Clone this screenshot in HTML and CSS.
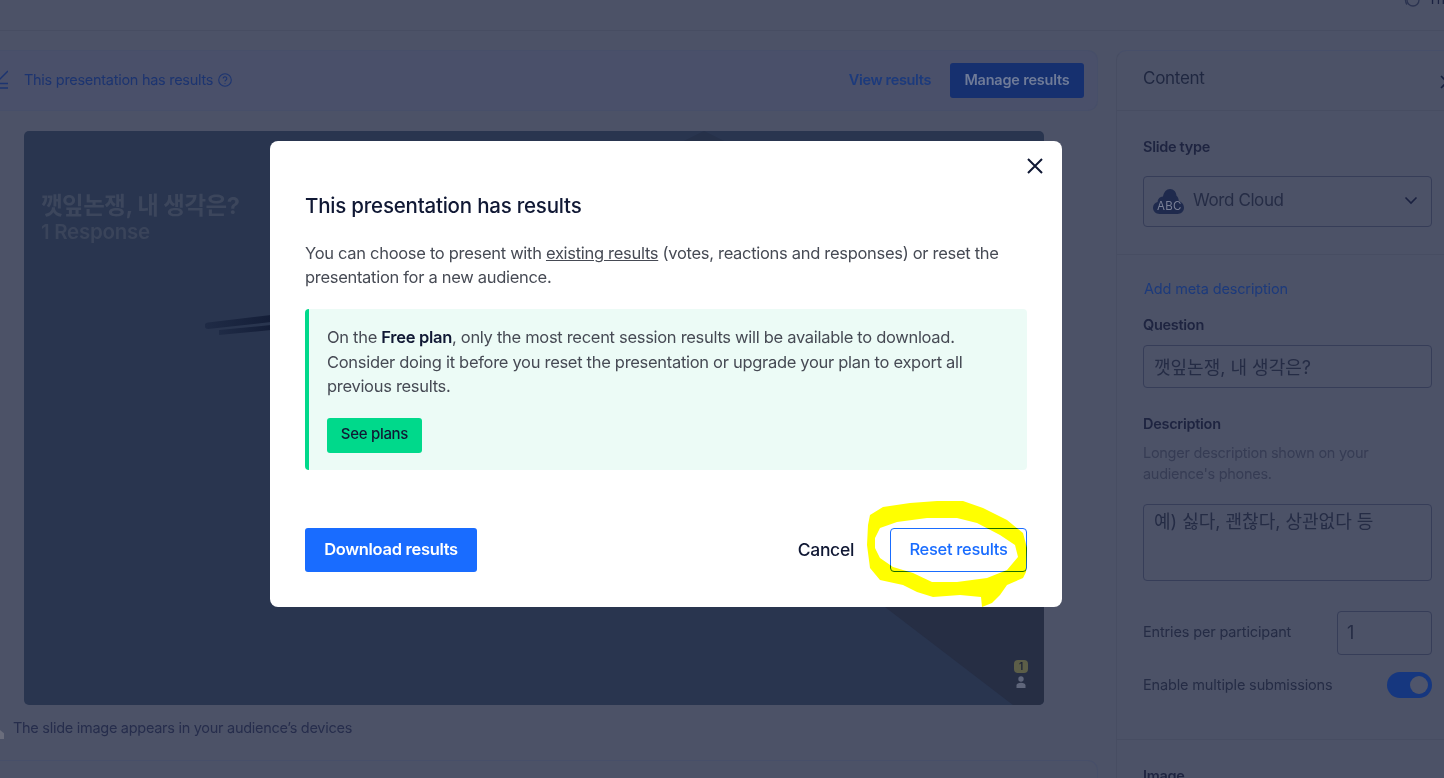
FILE: index.html
```html
<!DOCTYPE html>
<html lang="en">
<head>
  <meta charset="UTF-8" />
  <title>Presentation results</title>
  <link rel="stylesheet" href="styles.css">
</head>
<body>
  <div class="topbar">
    <div class="share">
      <svg width="18" height="18" viewBox="0 0 18 18" fill="none" stroke="#2b3350" stroke-width="1.300"><circle cx="10" cy="11" r="6"/><path d="M4 15.500C1.500 12 2 7 6 5"/></svg>
      <span>Th</span>
    </div>
  </div>

  <div class="editor">
    <div class="main">
      <div class="banner">
        <div class="banner-left">
          <svg class="check-icon" width="16" height="20" viewBox="-8 0 16 20" fill="none" stroke="#1c3470" stroke-width="1.500"><path d="M-6 9l3 3L8 1"/><path d="M-8 13.500H8M-8 18H8"/></svg>
          <span>This presentation has results</span>
          <svg width="14" height="14" viewBox="0 0 14 14" fill="none" stroke="#1c3470" stroke-width="1.100"><circle cx="7" cy="7" r="6.300"/><path d="M5.200 5.500a1.800 1.800 0 1 1 2.800 1.500c-.7.400-1 .8-1 1.400"/><path d="M7 10v.8"/></svg>
        </div>
        <div class="banner-right">
          <a class="view-link">View results</a>
          <a class="manage-btn">Manage results</a>
        </div>
      </div>

      <div class="slide">
        <div class="peak"></div>
        <h1>깻잎논쟁, 내 생각은?</h1>
        <p>1 Response</p>
        <div class="corner"></div>
        <svg class="bars" width="70" height="22" viewBox="0 0 70 22">
          <defs><linearGradient id="barFade"><stop offset="0" stop-color="#1f2b46"/><stop offset="1" stop-color="#141e38"/></linearGradient></defs>
          <path fill="url(#barFade)" d="M3 7.500L66 0v7L3 14a3 3 0 0 1 0-6.500z"/>
          <path fill="url(#barFade)" d="M14 15L66 10v5L14 20z"/>
        </svg>
        <div class="count">
          <span class="count-num">1</span>
          <svg width="10" height="12" viewBox="0 0 10 12" fill="#5f667b"><circle cx="5" cy="3" r="2.700"/><path d="M.5 12V9.500C.5 7.500 2.500 6.700 5 6.700s4.500.8 4.500 2.800V12z"/></svg>
        </div>
      </div>

      <div class="caption">The slide image appears in your audience’s devices</div>
      <div class="next-card"></div>
    </div>

    <aside class="panel">
      <div class="panel-head">
        <span>Content</span>
        <svg class="panel-x" width="14" height="14" viewBox="0 0 14 14" fill="none" stroke="#1a2140" stroke-width="1.600"><path d="M1 1l12 12M13 1L1 13"/></svg>
      </div>
      <div class="panel-type">
        <div class="label">Slide type</div>
        <div class="select">
          <svg class="cloud" width="31" height="25" viewBox="0 0 31 25"><path fill="#1f2a4d" d="M6.500 25C3 25 0 22.500 0 18.800c0-3 2-5.200 4.600-5.800C4.800 9.800 7 7.600 10 7.500 10.800 3 13.500 0 17 0c3.800 0 6.300 3 6.500 6.800 1.500 1.200 2.200 3.200 2.300 5.300 3 .9 5.200 3.400 5.200 6.700 0 3.700-3 6.200-6.500 6.200z"/></svg>
          <span class="abc">ABC</span>
          <span class="select-text">Word Cloud</span>
          <svg class="chev" width="14" height="9" viewBox="0 0 14 9" fill="none" stroke="#1a2140" stroke-width="1.600"><path d="M1.500 1.500L7 7l5.500-5.500"/></svg>
        </div>
      </div>
      <div class="panel-form">
        <a class="meta-link">Add meta description</a>
        <div class="label q-label">Question</div>
        <div class="field">깻잎논쟁, 내 생각은?</div>
        <div class="label d-label">Description</div>
        <div class="hint">Longer description shown on your audience's phones.</div>
        <div class="field area">예) 싫다, 괜찮다, 상관없다 등</div>
        <div class="row entries">
          <span>Entries per participant</span>
          <div class="field small">1</div>
        </div>
        <div class="row submissions">
          <span>Enable multiple submissions</span>
          <div class="toggle"><div class="knob"></div></div>
        </div>
      </div>
      <div class="panel-image"><div class="label">Image</div></div>
    </aside>
  </div>

  <div class="edge-mark"></div>

  <div class="overlay">
    <div class="modal">
      <svg class="modal-x" width="18" height="18" viewBox="0 0 18 18" fill="none" stroke="#101834" stroke-width="2"><path d="M2 2l14 14M16 2L2 16"/></svg>
      <h2>This presentation has results</h2>
      <p class="intro">You can choose to present with <u>existing results</u> (votes, reactions and responses) or reset the presentation for a new audience.</p>
      <div class="notice">
        <p>On the <b>Free plan</b>, only the most recent session results will be available to download. Consider doing it before you reset the presentation or upgrade your plan to export all previous results.</p>
        <a class="plans-btn">See plans</a>
      </div>
      <div class="modal-actions">
        <a class="download-btn">Download results</a>
        <div class="actions-right">
          <a class="cancel">Cancel</a>
          <a class="reset-btn">Reset results</a>
        </div>
      </div>
    </div>
    <svg class="scribble" width="180" height="115" viewBox="0 0 180 115"><path fill="#ffff00" fill-rule="evenodd" d="M8 30L10 20L23 12L50 8L77 6L103 6L123 13L147 25L163 38L167 53L166 77L163 83L147 90L140 100L132 108L122 112L121 102L100 100L73 102L57 97L43 90L20 85L10 73L7 50Z M15 43L20 33L37 27L67 23L97 23L117 28L140 40L155 50L158 62L147 75L127 83L97 87L72 87L53 78L33 72L20 63L15 53Z"/></svg>
  </div>
</body>
</html>
```

FILE: styles.css
```css
* {
  box-sizing: border-box;
}
html, body {
  margin: 0;
  height: 100%;
  overflow: hidden;
}
body {
  position: relative;
  background: #4c5267;
  color: #1a2140;
  font-family: "Inter", "Noto Sans CJK KR", sans-serif;
  font-size: 15px;
  letter-spacing: -0.28px;
}

/* page behind the dialog */
.topbar {
  height: 31px;
  border-bottom: 1px solid #474d62;
  display: flex;
  justify-content: flex-end;
  overflow: hidden;
}
.share {
  display: flex;
  gap: 7px;
  margin: -11px 0 0 0;
  height: 20px;
  width: 41px;
  overflow: hidden;
  font-size: 14px;
  line-height: 20px;
  white-space: nowrap;
}
.share svg {
  flex: none;
}
.editor {
  display: flex;
  padding-top: 19px;
}
.main {
  width: 1116px;
  flex: none;
  padding-right: 18px;
}
.banner {
  height: 61px;
  padding: 0 13px 0 0;
  display: flex;
  justify-content: space-between;
  align-items: center;
  border: 1px solid #474f69;
  border-left: none;
  border-radius: 0 10px 10px 0;
  background: #4a506a;
  color: #1c3470;
  font-size: 14.500px;
}
.banner-left {
  display: flex;
  align-items: center;
  gap: 5px;
  margin-bottom: 2px;
}
.check-icon {
  margin-right: 11px;
  margin-left: -8px;
}
.banner-right {
  display: flex;
  align-items: center;
  gap: 19px;
  font-weight: 600;
  letter-spacing: -0.2px;
}
.view-link {
  color: #1c3a7c;
  letter-spacing: -0.35px;
  margin-bottom: 2px;
}
.manage-btn {
  width: 134px;
  height: 35px;
  line-height: 33px;
  text-align: center;
  background: #16306f;
  color: #6f7b98;
  border-radius: 3px;
}
.slide {
  position: relative;
  margin: 20px 0 0 24px;
  width: 1020px;
  height: 574px;
  padding: 61px 17px 0;
  background: #29354f;
  border-radius: 5px;
  overflow: hidden;
  color: #3c465c;
}
.slide h1 {
  margin: 0;
  font-size: 23.500px;
  line-height: 27px;
  font-weight: 700;
  letter-spacing: -0.5px;
}
.slide p {
  margin: 0;
  font-size: 20.500px;
  line-height: 26px;
  font-weight: 600;
  color: #3a445a;
}
.peak {
  position: absolute;
  left: 660px;
  top: 0;
  width: 40px;
  height: 10px;
  background: #263149;
  clip-path: polygon(50% 0, 100% 100%, 0 100%);
}
.corner {
  position: absolute;
  right: 0;
  bottom: 0;
  width: 159px;
  height: 98px;
  background: #262e44;
  clip-path: polygon(0 0, 100% 0, 100% 100%, 80.500% 100%);
}
.bars {
  position: absolute;
  left: 181px;
  top: 184px;
}
.count {
  position: absolute;
  right: 16px;
  bottom: 17px;
  width: 14px;
  display: flex;
  flex-direction: column;
  align-items: center;
  gap: 3px;
}
.count-num {
  width: 14px;
  height: 13px;
  line-height: 13px;
  text-align: center;
  font-size: 10px;
  font-weight: 600;
  letter-spacing: 0;
  background: #5c5e48;
  color: #1c2235;
  border-radius: 4px;
}
.caption {
  margin: 14px 0 0 13px;
  line-height: 18px;
  font-size: 14.500px;
  color: #262d4c;
}
.next-card {
  margin-top: 23px;
  height: 40px;
  border-top: 1px solid #474f69;
  border-right: 1px solid #474f69;
  border-radius: 0 10px 0 0;
}
.edge-mark {
  position: absolute;
  left: 0;
  top: 730px;
  width: 4px;
  height: 9px;
  background: #6a6d7c;
  clip-path: polygon(0 0, 100% 35%, 100% 100%, 0 100%);
}
.panel {
  flex: 1;
  border-left: 1px solid #474d62;
  border-top: 1px solid #474f69;
  border-radius: 10px 0 0 0;
}
.panel-head {
  height: 60px;
  padding: 0 0 6px 26px;
  display: flex;
  align-items: center;
  justify-content: space-between;
  border-bottom: 1px solid #474d62;
  font-size: 17px;
  color: #1f2740;
}
.panel-x {
  margin-right: -10px;
  margin-top: 8px;
}
.panel-type {
  height: 144px;
  padding: 26px 12px 0 26px;
  border-bottom: 1px solid #474d62;
}
.label {
  font-weight: 600;
  font-size: 14.500px;
  line-height: 20px;
  color: #1e2440;
}
.select {
  position: relative;
  margin-top: 19px;
  height: 51px;
  display: flex;
  align-items: center;
  padding-left: 9px;
  border: 1px solid #363d58;
  border-radius: 4px;
  font-size: 17px;
  letter-spacing: -0.4px;
  color: #252c45;
}
.cloud {
  flex: none;
}
.abc {
  position: absolute;
  left: 13px;
  top: 22px;
  font-size: 11.500px;
  line-height: 14px;
  letter-spacing: 0.3px;
  color: #7a8096;
}
.select-text {
  margin-left: 9px;
  margin-top: -3px;
}
.chev {
  position: absolute;
  right: 13px;
  top: 19px;
}
.panel-form {
  height: 485px;
  padding: 24px 12px 0 26px;
  border-bottom: 1px solid #474d62;
}
.meta-link {
  display: block;
  line-height: 20px;
  font-size: 14.500px;
  letter-spacing: -0.15px;
  color: #1c3a7c;
  margin-left: 1px;
}
.q-label {
  margin-top: 16px;
}
.field {
  margin-top: 10px;
  height: 43px;
  padding: 0 10px;
  line-height: 43px;
  border: 1px solid #363d58;
  border-radius: 4px;
  font-size: 18px;
  letter-spacing: 0;
  color: #252c45;
}
.d-label {
  margin-top: 26px;
}
.hint {
  margin-top: 8px;
  line-height: 21px;
  font-size: 14.500px;
  color: #363c54;
}
.field.area {
  margin-top: 20px;
  height: 77px;
  line-height: 34px;
}
.row {
  display: flex;
  align-items: center;
  justify-content: space-between;
  font-size: 14.500px;
  letter-spacing: -0.15px;
  color: #252c45;
}
.entries {
  margin-top: 30px;
}
.entries span {
  margin-bottom: 4px;
}
.field.small {
  margin-top: 0;
  width: 95px;
  height: 44px;
  padding-left: 9px;
  line-height: 42px;
  letter-spacing: 0;
}
.submissions {
  margin-top: 17px;
}
.submissions span {
  margin-bottom: 2px;
}
.toggle {
  width: 45px;
  height: 26px;
  padding: 4px;
  display: flex;
  justify-content: flex-end;
  background: #16377f;
  border-radius: 13px;
}
.knob {
  width: 18px;
  height: 18px;
  border-radius: 50%;
  background: #4f556b;
}
.panel-image {
  padding: 26px 0 0 26px;
}

/* dialog */
.overlay {
  position: absolute;
  inset: 0;
  padding: 141px 0 0 270px;
}
.modal {
  position: relative;
  width: 792px;
  height: 466px;
  padding: 50px 35px 0;
  background: #fff;
  border-radius: 8px;
  color: #464a54;
  font-size: 16.500px;
  letter-spacing: -0.3px;
}
.modal-x {
  position: absolute;
  top: 16px;
  right: 18px;
}
.modal h2 {
  margin: 0;
  font-size: 20.500px;
  line-height: 30px;
  font-weight: 500;
  letter-spacing: -0.22px;
  color: #101834;
}
.intro {
  margin: 20px 0 0;
  line-height: 24px;
}
.notice {
  margin-top: 20px;
  height: 161px;
  padding: 16px 17px 0 18px;
  background: #ecfbf6;
  border-left: 4px solid #00d98b;
  border-radius: 4px;
}
.notice p {
  margin: 0;
  line-height: 24.500px;
}
.notice b {
  font-weight: 600;
  color: #101834;
}
.plans-btn {
  display: block;
  margin-top: 19px;
  width: 95px;
  height: 35px;
  line-height: 32px;
  text-align: center;
  background: #00d98b;
  color: #101834;
  font-size: 15px;
  font-weight: 500;
  border-radius: 3px;
}
.modal-actions {
  margin-top: 58px;
  display: flex;
  justify-content: space-between;
  align-items: center;
}
.download-btn {
  width: 172px;
  height: 44px;
  line-height: 43px;
  text-align: center;
  background: #196cff;
  color: #fff;
  font-size: 16.500px;
  font-weight: 600;
  border-radius: 3px;
}
.actions-right {
  display: flex;
  align-items: center;
  gap: 36px;
}
.cancel {
  color: #101834;
  font-size: 17.500px;
  font-weight: 500;
  margin-bottom: 2px;
}
.reset-btn {
  width: 137px;
  height: 44px;
  line-height: 41px;
  text-align: center;
  border: 1px solid #196cff;
  border-radius: 4px;
  color: #196cff;
  font-weight: 500;
}
.scribble {
  position: absolute;
  left: 860px;
  top: 495px;
  mix-blend-mode: multiply;
}
```
